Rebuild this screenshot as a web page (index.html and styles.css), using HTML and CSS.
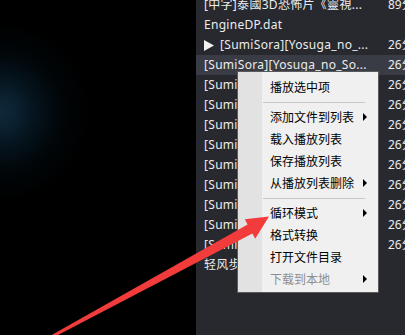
FILE: index.html
```html
<!DOCTYPE html>
<html lang="zh-CN">

<head>
    <meta charset="UTF-8">
    <meta name="viewport" content="width=device-width, initial-scale=1.0">
    <title>播放列表</title>
    <link rel="stylesheet" href="styles.css">
</head>

<body>
    <div class="app">
        <!-- Video area -->
        <div class="stage"></div>

        <!-- Playlist -->
        <div class="playlist">
            <ul class="tracks">
                <li class="track"><span class="title">[中字]泰國3D恐怖片《靈視...</span><span class="time">89分</span></li>
                <li class="track"><span class="title">EngineDP.dat</span><span class="time"></span></li>
                <li class="track playing">
                    <span class="title">
                        <svg class="play-icon" width="10" height="11" viewBox="0 0 10 11"><polygon points="0,0 10,5.5 0,11" fill="#f2f2f2"/></svg>[SumiSora][Yosuga_no_...
                    </span>
                    <span class="time">26分</span>
                </li>
                <li class="track selected"><span class="title">[SumiSora][Yosuga_no_So...</span><span class="time">26分</span></li>
                <li class="track"><span class="title">[SumiSora][Yosuga_no_So...</span><span class="time">26分</span></li>
                <li class="track"><span class="title">[SumiSora][Yosuga_no_So...</span><span class="time">26分</span></li>
                <li class="track"><span class="title">[SumiSora][Yosuga_no_So...</span><span class="time">26分</span></li>
                <li class="track"><span class="title">[SumiSora][Yosuga_no_So...</span><span class="time">26分</span></li>
                <li class="track"><span class="title">[SumiSora][Yosuga_no_So...</span><span class="time">26分</span></li>
                <li class="track"><span class="title">[SumiSora][Yosuga_no_So...</span><span class="time">26分</span></li>
                <li class="track"><span class="title">[SumiSora][Yosuga_no_So...</span><span class="time">26分</span></li>
                <li class="track"><span class="title">[SumiSora][Yosuga_no_So...</span><span class="time">26分</span></li>
                <li class="track"><span class="title">[SumiSora][Yosuga_no_So...</span><span class="time">26分</span></li>
                <li class="track"><span class="title">轻风歩道...</span><span class="time"></span></li>
            </ul>
        </div>
    </div>

    <!-- Right click menu -->
    <ul class="context-menu">
        <li class="menu-item">播放选中项</li>
        <li class="menu-sep"></li>
        <li class="menu-item has-sub">添加文件到列表</li>
        <li class="menu-item">载入播放列表</li>
        <li class="menu-item">保存播放列表</li>
        <li class="menu-item has-sub">从播放列表删除</li>
        <li class="menu-sep"></li>
        <li class="menu-item has-sub">循环模式</li>
        <li class="menu-item">格式转换</li>
        <li class="menu-item">打开文件目录</li>
        <li class="menu-item has-sub disabled">下载到本地</li>
    </ul>

    <!-- Red annotation arrow -->
    <svg class="pointer" width="405" height="335" viewBox="0 0 405 335">
        <polygon points="39.4,341.9 247.6,224.6 244.8,219.3 269,216.5 255.2,238.7 252.4,233.4 40.6,344.1" fill="#f23c3c"/>
    </svg>
</body>

</html>
```

FILE: styles.css
```css
/* General Reset */
body {
    margin: 0;
    padding: 0;
    width: 405px;
    height: 335px;
    overflow: hidden;
    position: relative;
    font-family: "Noto Sans", "Noto Sans CJK SC", sans-serif;
    font-size: 12px;
    background: #000;
}

ul {
    list-style: none;
    margin: 0;
    padding: 0;
}

.app {
    display: flex;
    height: 335px;
}

/* Video area */
.stage {
    width: 196px;
    flex-shrink: 0;
    background: radial-gradient(circle at 0 112px, #0f293a 0, #0b2130 16px, #05141e 34px, #010609 60px, #000 90px);
}

/* Playlist */
.playlist {
    flex: 1;
    background-color: #27292f;
    overflow: hidden;
}

.tracks {
    margin-top: -5px;
}

.track {
    display: grid;
    grid-template-columns: 184px auto;
    height: 20px;
    line-height: 20px;
    padding-left: 8px;
    color: #ececec;
    white-space: nowrap;
}

.track .title {
    overflow: hidden;
    display: flex;
    align-items: center;
    letter-spacing: 0.3px;
}

.track .time {
    overflow: hidden;
}

.track.selected {
    background-color: #393c45;
}

.play-icon {
    margin-right: 6px;
    flex-shrink: 0;
}

/* Context menu */
.context-menu {
    position: absolute;
    left: 237px;
    top: 71px;
    width: 140px;
    padding: 4px 0 2px;
    border: 1px solid #5a5a5a;
    background: linear-gradient(to right, #e2e2e2 0, #e2e2e2 24px, #f0f0f0 24px);
    color: #000;
    font-family: "Noto Sans CJK SC", sans-serif;
}

.menu-item {
    position: relative;
    height: 22px;
    line-height: 22px;
    padding-left: 32px;
}

.menu-item.has-sub::after {
    content: "";
    position: absolute;
    left: 125px;
    top: 7px;
    border-top: 4px solid transparent;
    border-bottom: 4px solid transparent;
    border-left: 4px solid #000;
}

.menu-item.disabled {
    color: #8e8e8e;
}

.menu-sep {
    height: 8px;
    margin: 0 13px 0 25px;
    background: linear-gradient(#c9c9c9, #c9c9c9) center / 100% 1px no-repeat;
}

/* Annotation */
.pointer {
    position: absolute;
    left: 0;
    top: 0;
}
```
